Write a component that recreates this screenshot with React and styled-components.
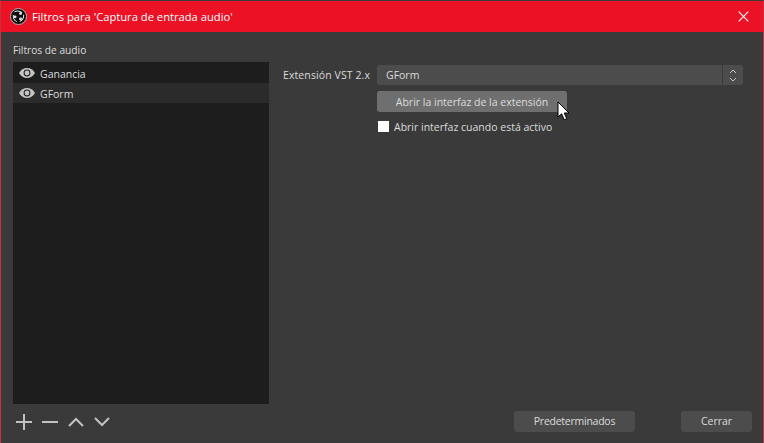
import React from 'react';
import styled, { createGlobalStyle } from 'styled-components';

const GlobalStyle = createGlobalStyle`
  html, body {
    margin: 0;
    padding: 0;
    background: #3a3a3a;
  }
  * {
    box-sizing: border-box;
  }
`;

const Win = styled.div`
  width: 764px;
  height: 443px;
  display: flex;
  flex-direction: column;
  overflow: hidden;
  background: #3a3a3a;
  border-left: 1px solid #c8323f;
  border-right: 1px solid #c8323f;
  border-top: 1px solid #3a3a3a;
  color: #dcdcdc;
  font-family: "Open Sans", "Liberation Sans", sans-serif;
  font-size: 10.5px;
`;

const TitleBar = styled.div`
  height: 31px;
  flex: none;
  background: #ec1226;
  color: #fff;
  display: flex;
  align-items: center;
  padding: 0 14px 0 9px;
  gap: 5px;
  font-size: 11.2px;
`;

const Title = styled.div`
  flex: 1;
`;

const Body = styled.div`
  flex: 1;
  display: flex;
  flex-direction: column;
  padding: 12px 11px 11px 12px;
  min-height: 0;
`;

const Columns = styled.div`
  flex: 1;
  display: flex;
  min-height: 0;
`;

const LeftCol = styled.div`
  width: 256px;
  flex: none;
  display: flex;
  flex-direction: column;
`;

const ListLabel = styled.div`
  height: 18px;
  line-height: 12px;
  font-size: 10.2px;
`;

const FilterList = styled.div`
  flex: 1;
  background: #1d1d1d;
  padding-top: 1px;
`;

const FilterRow = styled.div`
  height: 20px;
  display: flex;
  align-items: center;
  gap: 5px;
  padding-left: 6px;
  background: ${p => (p.$selected ? '#2b2b2b' : 'transparent')};
`;

const RowText = styled.span`
  padding-top: 1px;
`;

const RightCol = styled.div`
  flex: 1;
  padding: 21px 9px 0 14px;
  display: grid;
  grid-template-columns: 94px 1fr;
  grid-auto-rows: min-content;
  row-gap: 6px;
  align-items: center;
`;

const FieldLabel = styled.div`
  letter-spacing: 0.1px;
  white-space: nowrap;
`;

const SelectBox = styled.div`
  height: 20px;
  display: flex;
`;

const SelectValue = styled.div`
  flex: 1;
  background: #4c4c4c;
  border-radius: 3px 0 0 3px;
  padding-left: 9px;
  line-height: 21px;
`;

const SelectArrows = styled.div`
  width: 20px;
  margin-left: 1px;
  background: #4c4c4c;
  border-radius: 0 3px 3px 0;
  display: flex;
  align-items: center;
  justify-content: center;
`;

const ActionCell = styled.div`
  grid-column: 2;
  position: relative;
`;

const ActionButton = styled.div`
  width: 190px;
  height: 21px;
  background: #6f6f6f;
  border-radius: 3px;
  text-align: center;
  line-height: 22px;
`;

const Cursor = styled.svg`
  position: absolute;
  left: 180px;
  top: 10px;
`;

const CheckRow = styled.div`
  grid-column: 2;
  height: 11px;
  margin-top: 3px;
  display: flex;
  align-items: center;
  gap: 5px;
  padding-left: 1px;
`;

const CheckBox = styled.div`
  width: 11px;
  height: 11px;
  background: #fff;
`;

const Footer = styled.div`
  height: 21px;
  margin-top: 7px;
  flex: none;
  display: flex;
  align-items: center;
`;

const ToolIcons = styled.div`
  display: flex;
  align-items: center;
  gap: 10px;
  padding-left: 3px;
  flex: 1;
`;

const FootButton = styled.div`
  height: 21px;
  width: ${p => p.$width}px;
  margin-left: ${p => p.$gap || 0}px;
  background: #4c4c4c;
  border-radius: 3px;
  text-align: center;
  line-height: 21px;
  letter-spacing: ${p => p.$tracking || 0}px;
`;

const ObsLogo = () => (
  <svg width="17" height="17" viewBox="0 0 20 20">
    <circle cx="10" cy="10" r="9.4" fill="#0e0e0e" stroke="#bdbdbd" strokeWidth="1.1" />
    <path d="M5.2 4.6Q10 2 14.2 5.6" stroke="#e6e6e6" strokeWidth="1.2" fill="none" />
    <circle cx="12.4" cy="6.6" r="1.7" fill="#e6e6e6" />
    <path d="M16 8Q16.6 13.6 11.4 16" stroke="#e6e6e6" strokeWidth="1.2" fill="none" />
    <circle cx="12.4" cy="12.8" r="1.7" fill="#e6e6e6" />
    <path d="M8 16Q3 13.6 4 8" stroke="#e6e6e6" strokeWidth="1.2" fill="none" />
    <circle cx="6" cy="10.4" r="1.7" fill="#e6e6e6" />
  </svg>
);

const CloseIcon = () => (
  <svg width="11" height="11" viewBox="0 0 11 11">
    <path d="M.7.7l9.6 9.6M10.3.7L.7 10.3" stroke="#fff" strokeWidth="1.1" fill="none" />
  </svg>
);

const EyeIcon = () => (
  <svg width="16" height="10" viewBox="0 0 16 10">
    <path d="M0 5C2 1.8 4.8 0 8 0s6 1.8 8 5c-2 3.2-4.8 5-8 5S2 8.2 0 5z" fill="#c4c4c4" />
    <circle cx="8" cy="5" r="3.4" fill="#1d1d1d" />
    <circle cx="8" cy="5" r="2.4" fill="#c4c4c4" />
  </svg>
);

const Updown = () => (
  <svg width="8" height="13" viewBox="0 0 8 13">
    <path d="M1 4l3-3 3 3M1 9l3 3 3-3" stroke="#c8c8c8" strokeWidth="1" fill="none" />
  </svg>
);

const ToolIcon = ({ d }) => (
  <svg width="16" height="16" viewBox="0 0 16 16">
    <path d={d} stroke="#c2c2c2" strokeWidth="2" fill="none" />
  </svg>
);

const Pointer = () => (
  <Cursor width="14" height="20" viewBox="0 0 14 20">
    <path d="M1 1v15l3.6-3.2 2.6 6 2.6-1.1-2.6-5.7H12z" fill="#fff" stroke="#000" strokeWidth="1" />
  </Cursor>
);

export default function App() {
  return (
    <>
      <GlobalStyle />
      <Win>
        <TitleBar>
          <ObsLogo />
          <Title>Filtros para 'Captura de entrada audio'</Title>
          <CloseIcon />
        </TitleBar>
        <Body>
          <Columns>
            <LeftCol>
              <ListLabel>Filtros de audio</ListLabel>
              <FilterList>
                <FilterRow><EyeIcon /><RowText>Ganancia</RowText></FilterRow>
                <FilterRow $selected><EyeIcon /><RowText>GForm</RowText></FilterRow>
              </FilterList>
            </LeftCol>
            <RightCol>
              <FieldLabel>Extensión VST 2.x</FieldLabel>
              <SelectBox>
                <SelectValue>GForm</SelectValue>
                <SelectArrows><Updown /></SelectArrows>
              </SelectBox>
              <ActionCell>
                <ActionButton>Abrir la interfaz de la extensión</ActionButton>
                <Pointer />
              </ActionCell>
              <CheckRow>
                <CheckBox />
                Abrir interfaz cuando está activo
              </CheckRow>
            </RightCol>
          </Columns>
          <Footer>
            <ToolIcons>
              <ToolIcon d="M8 0v16M0 8h16" />
              <ToolIcon d="M0 8h16" />
              <ToolIcon d="M1 12l7-7 7 7" />
              <ToolIcon d="M1 4l7 7 7-7" />
            </ToolIcons>
            <FootButton $width={121} $tracking={-0.25}>Predeterminados</FootButton>
            <FootButton $width={71} $gap={46}>Cerrar</FootButton>
          </Footer>
        </Body>
      </Win>
    </>
  );
}
